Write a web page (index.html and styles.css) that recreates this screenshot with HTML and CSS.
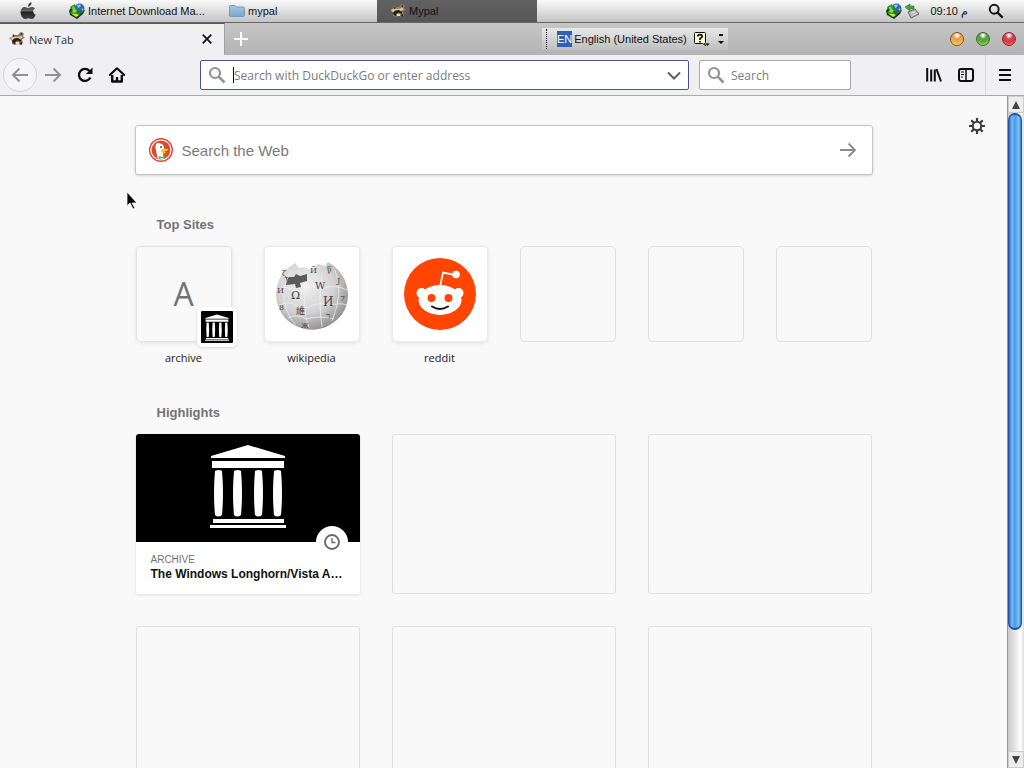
FILE: index.html
```html
<!DOCTYPE html>
<html lang="en">
<head>
<meta charset="utf-8">
<title>New Tab</title>
<link rel="stylesheet" href="styles.css">
</head>
<body>
<svg class="defs" aria-hidden="true">
  <defs>
    <linearGradient id="apple-g" x1="0" y1="0" x2="0" y2="1"><stop offset="0" stop-color="#222"/><stop offset=".5" stop-color="#666"/><stop offset=".6" stop-color="#222"/><stop offset="1" stop-color="#444"/></linearGradient>
    <linearGradient id="folder-g" x1="0" y1="0" x2="0" y2="1"><stop offset="0" stop-color="#a6cbe3"/><stop offset="1" stop-color="#78a8ca"/></linearGradient>
    <radialGradient id="globe-g" cx=".4" cy=".35" r=".68"><stop offset="0" stop-color="#f1f1f1"/><stop offset=".6" stop-color="#d2d2d2"/><stop offset="1" stop-color="#8f8f8f"/></radialGradient>
    <symbol id="lens" viewBox="0 0 18 18"><circle cx="7" cy="7" r="5" fill="none" stroke="currentColor" stroke-width="2.2"/><path d="M10.7 10.7 16.5 16.5" stroke="currentColor" stroke-width="2.6"/></symbol>
    <symbol id="idm" viewBox="0 0 16 16">
      <path d="M0 8 3 3 9 8 16 7 14 11 8 16 1 12z" fill="#17391a"/>
      <circle cx="10.500" cy="5.500" r="5" fill="#2f69a6"/><path d="M8 2q2-1 4 0l-1 2-2 1zM12.500 6l2-1-1 3z" fill="#9cc3e0"/>
      <path d="M1 4 6 1l1 5 3 2-3 4-6-2 2-3z" fill="#249128"/><path d="M3 4.500 5 3l1 3 2 2-2 2-3-1 1-2z" fill="#7be03a"/>
      <path d="M2 10.500 7 11l6-3-4 5-2 1z" fill="#e8d52a"/><path d="M7 9l5-2 1 2-4 3z" fill="#197a2c"/>
    </symbol>
    <symbol id="raccoon" viewBox="0 0 16 16">
      <path d="M0 7 3 5.500 4 3 6 4 9 4 11 1.500 13 1 15 3 14 5 16 7 13 8 14 12 12 14 9 13 6 14 3 13 3 10z" fill="#8d7b62"/>
      <path d="M1 7 4 5.500 8 6 12 5 14 6 11 8 9 7.500 6 9 3 9z" fill="#d9caa6"/>
      <path d="M3 10 5 7.500 9 7 12 9 12 11 10 10 8 9.500 6 11 6 13 4 12zM4 4l2 1-2 1zM11 3l2-1v2zM11 12l2-1v2l-1 1z" fill="#241e19"/>
      <path d="M7 11h3v2H7z" fill="#eee2c4"/>
    </symbol>
    <symbol id="temple" viewBox="0 0 76 84">
      <path d="M1 12 38 1 75 12v2H1zM2 17h72v7H2zM3 75h71v4H3zM0 81h76v3H0z" fill="#fff"/>
      <g fill="#fff"><path id="column" d="M5 27q4-2 7 0 2 22 0 44-4 3-7 0-2-22 0-44z"/><use href="#column" x="19"/><use href="#column" x="40"/><use href="#column" x="59"/></g>
    </symbol>
  </defs>
</svg>

<header class="menubar">
  <button class="apple" aria-label="Apple menu"><svg width="16" height="18" viewBox="0 0 16 18"><path d="M8 4.8C8 2.500 9.500.600 11.500.300 11.700 2.500 10.200 4.300 8 4.800zM8 6C9 6 10 5 12 5c1 0 2.300.500 3 1.500-2.600 1.500-2.300 5 .6 6.200C14.800 15 13.200 17 12 17c-1.500 0-2-.8-3.600-.8S6.200 17 5 17C2.500 17 .5 13 .5 10 .5 7 2.400 5 4.700 5 6 5 7 6 8 6z" fill="url(#apple-g)"/></svg></button>
  <button class="task"><svg width="16" height="16"><use href="#idm"/></svg>Internet Download Ma...</button>
  <button class="task"><svg width="16" height="14" viewBox="0 0 16 14"><path d="M.5 3Q.5 1.500 2 1.500h4l1.500 1.500H14q1.500 0 1.500 1.500V11q0 1.500-1.500 1.500H2Q.5 12.500.5 11z" fill="url(#folder-g)" stroke="#7897ad"/></svg>mypal</button>
  <button class="task task-active"><svg width="16" height="16"><use href="#raccoon"/></svg>Mypal</button>
  <div class="tray">
    <svg width="16" height="16"><use href="#idm"/></svg>
    <svg width="16" height="16" viewBox="0 0 16 16"><path d="M4 9 11 6l4 5-8 4z" fill="#b4b4b4" stroke="#666"/><path d="M7 10.500l4-2M8.500 12.500l4-2" stroke="#eee"/><path d="M1 4 6 1v2h4v3H6v2z" fill="#3aaa35" stroke="#26752a" stroke-width=".6"/></svg>
    <span class="clock">09:10 م</span>
    <button aria-label="Search"><svg class="dark" width="16" height="16"><use href="#lens"/></svg></button>
  </div>
</header>

<div class="tabstrip">
  <div class="tab"><svg width="16" height="16"><use href="#raccoon"/></svg><span>New Tab</span>
    <button aria-label="Close tab"><svg width="10" height="10" viewBox="0 0 10 10"><path d="M.7.7 9.300 9.300M9.300.7.7 9.300" stroke="#111" stroke-width="1.700"/></svg></button></div>
  <button class="newtab" aria-label="New tab"><svg width="14" height="14" viewBox="0 0 14 14"><path d="M7 0v14M0 7h14" stroke="#fff" stroke-width="2"/></svg></button>
  <div class="window-buttons">
    <button class="orb amber" aria-label="Minimize"></button>
    <button class="orb green" aria-label="Maximize"></button>
    <button class="orb red" aria-label="Close"></button>
  </div>
  <div class="langbar">
    <span class="grip"></span><span class="code">EN</span><span class="lang">English (United States)</span>
    <button aria-label="Help"><svg width="17" height="16" viewBox="0 0 17 16"><path d="M2.500 1.500h9q1 0 1 1v9q0 1-1 1l1 2-3-2h-7q-1 0-1-1v-9q0-1 1-1z" fill="#ffffd9" stroke="#111"/><path d="M4.800 5.500Q4.800 3.700 7 3.700T9.200 5.500Q9.200 6.500 7 7.500v1.500M7 10v1.500" fill="none" stroke="#111" stroke-width="1.700"/><path d="M12.500 12.500h4l-2 2.500z"/></svg></button>
    <button aria-label="Options"><svg width="6" height="12" viewBox="0 0 6 12"><path d="M1 2h4" stroke="#000" stroke-width="2"/><path d="M0 8h6l-3 3z"/></svg></button>
  </div>
</div>

<nav class="toolbar">
  <button class="back" aria-label="Back"><svg width="18" height="16" viewBox="0 0 18 16"><path d="M17 8H2M8.500 1.500 2 8l6.500 6.500" fill="none" stroke="#929294" stroke-width="2"/></svg></button>
  <button class="nav" aria-label="Forward"><svg width="18" height="16" viewBox="0 0 18 16"><path d="M1 8h15M9.500 1.500 16 8l-6.500 6.500" fill="none" stroke="#929294" stroke-width="2"/></svg></button>
  <button class="nav" aria-label="Reload"><svg width="16" height="16" viewBox="0 0 16 16"><path d="M13.400 10.500A6 6 0 1 1 12.500 4" fill="none" stroke="#0c0c0d" stroke-width="2.300"/><path d="M15.500.5V7H9z" fill="#0c0c0d"/></svg></button>
  <button class="nav" aria-label="Home"><svg width="16" height="16" viewBox="0 0 16 16"><path d="M.8 8 8 1.300 15.200 8" fill="none" stroke="#0c0c0d" stroke-width="2.200" stroke-linecap="round" stroke-linejoin="round"/><path d="M3.200 8v6.500h9.600V8M8 10v5" fill="none" stroke="#0c0c0d" stroke-width="2.400" stroke-linejoin="round"/></svg></button>
  <label class="field address"><svg width="18" height="18"><use href="#lens"/></svg><span class="caret"></span><input type="text" aria-label="Address" placeholder="Search with DuckDuckGo or enter address"><svg width="14" height="9" viewBox="0 0 14 9"><path d="M1 1.500 7 7.500 13 1.500" fill="none" stroke="#606062" stroke-width="2"/></svg></label>
  <label class="field search"><svg width="18" height="18"><use href="#lens"/></svg><input type="text" aria-label="Search" placeholder="Search"></label>
  <div class="tools">
    <button aria-label="Library"><svg width="16" height="16" viewBox="0 0 16 16"><path d="M1.200 1v13.500M5.200 2.500v12M8.800 2.500v12M10.500 2 15 14.500" fill="none" stroke="#0c0c0d" stroke-width="2"/></svg></button>
    <button aria-label="Sidebars"><svg width="16" height="16" viewBox="0 0 16 16"><rect x="1" y="2" width="14" height="12" rx="2" fill="none" stroke="#0c0c0d" stroke-width="2"/><path d="M8 2v12" stroke="#0c0c0d" stroke-width="1.500"/><path d="M3 5h3M3 7.500h3M3 10h2" stroke="#0c0c0d"/></svg></button>
    <button class="menu" aria-label="Menu"><svg width="12" height="14" viewBox="0 0 12 14"><path d="M0 2h12M0 7h12M0 12h12" stroke="#0c0c0d" stroke-width="2"/></svg></button>
  </div>
</nav>

<div class="viewport">
  <main class="page">
    <button class="settings" aria-label="Settings"><svg width="16" height="16" viewBox="0 0 16 16"><circle cx="8" cy="8" r="4.200" fill="none" stroke="#3a3a3c" stroke-width="2"/><path d="M8 0v3M8 13v3M0 8h3M13 8h3M2.300 2.300l2.300 2.300M11.400 11.400l2.300 2.300M13.700 2.300l-2.300 2.300M4.600 11.400l-2.300 2.300" stroke="#3a3a3c" stroke-width="2.200"/></svg></button>
    <svg class="cursor" width="12" height="20" viewBox="0 0 12 20"><path d="M1 1v14l3-3 3 6 2-1-3-5h5z" fill="#000" stroke="#fff" stroke-width=".8"/></svg>
    <div class="content">
      <form class="websearch">
        <svg width="24" height="24" viewBox="0 0 24 24"><circle cx="12" cy="12" r="12" fill="#dc4a31"/><circle cx="12" cy="12" r="10" fill="none" stroke="#fff" stroke-width="1.200"/><path d="M8 5Q6 6.500 6.500 10L8.500 20q3.500 2 6.500 1l-1-5q2-4 1-7Q14 5 8 5z" fill="#fff"/><circle cx="12" cy="9" r="1" fill="#395a83"/><path d="M12 12q4-2 7.500-.5-2 2-4 2 2 1 1 2-3 0-4.500-2z" fill="#fbc02d"/><path d="M10 18l3 1 3-1v3l-3-1-3 1z" fill="#4caf50"/></svg>
        <input type="text" aria-label="Search the Web" placeholder="Search the Web">
        <button aria-label="Go"><svg width="18" height="16" viewBox="0 0 18 16"><path d="M1 8h15M9.500 1.500 16 8l-6.500 6.500" fill="none" stroke="#8a8a8c" stroke-width="1.800"/></svg></button>
      </form>

      <h2>Top Sites</h2>
      <div class="sites">
        <a class="site" href="#archive"><span class="tile letter">A<span class="badge"><svg width="24" height="27"><use href="#temple"/></svg></span></span>archive</a>
        <a class="site" href="#wikipedia"><span class="tile filled"><svg width="76" height="76" viewBox="0 0 76 76">
          <path d="M21 7 14 12Q2 22 2 40 4 60 20 69q17 9 34 1 19-10 20-30 0-18-14-30L54 6l-3 4-7-2-3 3-4 3-7-3-5 1z" fill="url(#globe-g)"/>
          <path d="M12 21h8l2-3 4 2 7-2v7l-7 2 1 4-5 1-1-4-9 1z" fill="#5c5c5c"/>
          <path d="M17 15q-9 17-7 29 3 16 12 25M33 31q-6 18 2 41M48 18q-4 24 0 53M61 14q9 22-3 51M3 34q10-5 16 0 8 5 14-2 8-3 15 1 11-6 25 1M5 49q11-5 18 1 9 4 16-1 8-3 17 1 8-4 17-1M14 62q10-5 18 1 15-4 28 0" fill="none" stroke="#f3f3f3" stroke-width=".7"/>
          <g class="glyphs"><text x="17" y="43" font-size="11">Ω</text><text x="41" y="33" font-size="10">W</text><text x="49" y="50" font-size="12">И</text><text x="22" y="58" font-size="9">維</text><text x="52" y="63" font-size="9">ר</text><text x="3" y="37" font-size="8">И</text><text x="5" y="54" font-size="8">ន</text><text x="36" y="17" font-size="8">Й</text><text x="53" y="16" font-size="8">წ</text><text x="63" y="27" font-size="8">J</text><text x="66" y="45" font-size="8">7</text><text x="8" y="20" font-size="8">ζ</text><text x="27" y="72" font-size="7">Ж</text></g>
        </svg></span>wikipedia</a>
        <a class="site" href="#reddit"><span class="tile filled"><svg width="72" height="72" viewBox="0 0 72 72"><circle cx="36" cy="36" r="36" fill="#ff4500"/><g fill="#fff"><circle cx="17.500" cy="35" r="5"/><circle cx="54.500" cy="35" r="5"/><ellipse cx="36" cy="42" rx="21.500" ry="15"/><circle cx="52" cy="16.500" r="3.800"/></g><path d="M36 29 39 14.500 51 17" fill="none" stroke="#fff" stroke-width="1.800"/><circle cx="27.500" cy="40" r="4" fill="#ff4500"/><circle cx="44.500" cy="40" r="4" fill="#ff4500"/><path d="M28 48.500q8 5 16 0" fill="none" stroke="#111" stroke-width="2" stroke-linecap="round"/></svg></span>reddit</a>
        <span class="tile"></span><span class="tile"></span><span class="tile"></span>
      </div>

      <h2>Highlights</h2>
      <div class="cards">
        <a class="card story" href="#story">
          <span class="preview"><svg width="76" height="84"><use href="#temple"/></svg>
            <span class="visited"><svg width="16" height="16" viewBox="0 0 16 16"><circle cx="8" cy="8" r="7" fill="none" stroke="#6b6b6d" stroke-width="1.900"/><path d="M8 4v4.500h3.500" fill="none" stroke="#6b6b6d" stroke-width="1.300"/></svg></span></span>
          <span class="host">ARCHIVE</span>
          <span class="title">The Windows Longhorn/Vista A…</span>
        </a>
        <span class="card"></span><span class="card"></span><span class="card"></span><span class="card"></span><span class="card"></span>
      </div>
    </div>
  </main>
  <div class="scrollbar">
    <button aria-label="Scroll up"><svg width="8" height="8" viewBox="0 0 8 8"><path d="M0 8 4 0l4 8z" fill="#444"/></svg></button>
    <div class="track"><div class="thumb"></div></div>
    <button aria-label="Scroll down"><svg width="8" height="8" viewBox="0 0 8 8"><path d="M0 0h8L4 8z" fill="#444"/></svg></button>
  </div>
</div>
</body>
</html>
```
FILE: styles.css
```css
* { box-sizing: border-box; }
body {
  margin: 0;
  height: 100vh;
  display: flex;
  flex-direction: column;
  overflow: hidden;
  font-family: "Liberation Sans", Arial, sans-serif;
  font-size: 11px;
  color: #111;
  background: #f9f9fa;
}
button {
  display: flex;
  align-items: center;
  justify-content: center;
  padding: 0;
  border: 0;
  background: none;
  font: inherit;
  color: inherit;
}
input { min-width: 0; border: 0; padding: 0; outline: 0; background: none; font: inherit; }
svg { display: block; flex: none; }
a { color: inherit; text-decoration: none; }
.defs { position: absolute; width: 0; height: 0; }

.menubar {
  display: flex;
  flex: none;
  height: 23px;
  background: linear-gradient(#fafafa, #dedede 50%, #c4c4c4);
  border-bottom: 1px solid #666;
}
.apple { width: 55px; }
.task { width: 160px; padding: 0 14px; justify-content: flex-start; gap: 3px; white-space: nowrap; }
.task-active { margin-left: 2px; padding-left: 13px; background: linear-gradient(#626262, #565656); }
.tray { display: flex; align-items: center; gap: 2px; margin-left: auto; padding-right: 20px; }
.clock { margin: 0 18px 0 8px; }
.dark { color: #111; }

.tabstrip {
  position: relative;
  display: flex;
  flex: none;
  height: 32px;
  background: linear-gradient(#c6c6c6, #b3b3b3);
}
.tab {
  display: flex;
  align-items: center;
  gap: 4px;
  width: 225px;
  padding: 0 12px 1px 9px;
  background: #f0eff2;
  border-top: 1px solid #2f5fae;
  border-right: 1px solid #a2a2a2;
  font-family: "Open Sans", sans-serif;
  color: #333;
}
.tab button { margin-left: auto; }
.newtab { width: 32px; }
.window-buttons { display: flex; align-items: center; gap: 12px; margin-left: auto; padding-right: 8px; }
.orb { width: 14px; height: 14px; border-radius: 50%; border: 1px solid #8a4d22; }
.amber { background: radial-gradient(circle at 50% 20%, #fff 0 6%, #e39a55 32%, #f5b043 60%, #ffe77c); }
.green { border-color: #3d6b2c; background: radial-gradient(circle at 50% 20%, #fff 0 6%, #5c984a 32%, #5fb039 60%, #b6ec7c); }
.red { border-color: #94202a; background: radial-gradient(circle at 50% 20%, #fff 0 6%, #cf4a52 32%, #e0333c 60%, #ff8f8f); }
.langbar {
  position: absolute;
  left: 542px;
  top: 5px;
  display: flex;
  align-items: center;
  height: 22px;
  padding: 0 4px;
  background: linear-gradient(#e8e8e8, #bebebe);
}
.grip { width: 2px; height: 20px; margin-right: 9px; border-left: 1px dotted #000; }
.code { background: #3260ac; color: #fff; line-height: 16px; }
.lang { margin: 0 6px 0 2px; }
.langbar button + button { margin-left: 8px; }

.toolbar {
  display: flex;
  align-items: center;
  flex: none;
  height: 41px;
  padding-left: 3px;
  background: #f0eff2;
  border-bottom: 1px solid #aaaaac;
}
.back { width: 34px; height: 34px; border: 1px solid #d4d4d6; border-radius: 50%; background: #f5f5f7; }
.nav { width: 32px; height: 32px; }
.field {
  display: flex;
  align-items: center;
  height: 30px;
  padding: 0 7px;
  background: #fff;
  border: 1px solid #a9a9ae;
  border-radius: 2px;
  color: #929294;
  font-family: "Open Sans", sans-serif;
  font-size: 12px;
}
.field input { flex: 1; }
.field input::placeholder { color: #7c7c7e; opacity: 1; }
.address { flex: 1; margin-left: 67px; border-color: #4a5494; }
.caret { width: 1px; height: 16px; margin-left: 7px; background: #000; }
.search { width: 152px; margin-left: 10px; gap: 6px; }
.tools { display: flex; align-items: center; gap: 16px; margin-left: 75px; }
.menu { height: 40px; width: 39px; margin-left: -5px; border-left: 1px solid #dcdcdf; }

.viewport { display: flex; flex: 1; min-height: 0; }
.page { position: relative; flex: 1; min-width: 0; overflow: hidden; background: #f9f9fa; }
.settings { position: absolute; top: 22px; right: 22px; }
.cursor { position: absolute; left: 126px; top: 95px; }
.content { width: 738px; max-width: 100%; margin: 0 auto; padding: 29px 1px 0; }
.websearch {
  display: flex;
  align-items: center;
  gap: 9px;
  height: 50px;
  margin: 0 -1px;
  padding: 0 15px 0 13px;
  background: #fff;
  border: 1px solid #c6c6c8;
  border-radius: 3px;
  box-shadow: 0 1px 3px rgba(0, 0, 0, .15);
  font-size: 15px;
}
.websearch input { flex: 1; }
.websearch input::placeholder { color: #7a7a7c; opacity: 1; }
h2 { margin: 40px 0 12px 21px; font-size: 13px; line-height: 19px; color: #737375; }
.sites { display: grid; grid-template-columns: repeat(6, 1fr); gap: 32px; height: 116px; }
.site { text-align: center; font-family: "Open Sans", sans-serif; line-height: 16px; color: #222; }
.tile { position: relative; display: block; height: 96px; border: 1px solid #dededf; border-radius: 5px; }
.site .tile { display: flex; align-items: center; justify-content: center; margin-bottom: 8px; border-color: #e2e2e3; box-shadow: 0 1px 4px rgba(0, 0, 0, .1); }
.site .filled { background: #fff; border-color: #ececed; }
.letter { font-family: "Open Sans", sans-serif; font-size: 32px; color: #737375; }
.badge {
  position: absolute;
  right: -6px;
  bottom: -6px;
  display: flex;
  align-items: center;
  justify-content: center;
  width: 40px;
  height: 40px;
  background: #000;
  border: 4px solid #fff;
  border-radius: 5px;
  box-shadow: 0 1px 3px rgba(0, 0, 0, .15);
}
.glyphs { font-family: "DejaVu Serif", "Noto Sans CJK SC", serif; fill: #444; }
.sites + h2 { margin-top: 41px; }
.cards { display: grid; grid-template-columns: repeat(3, 1fr); grid-auto-rows: 160px; gap: 32px; }
.card { border: 1px solid #dededf; border-radius: 3px; }
.story { display: flex; flex-direction: column; border: 0; background: #fff; box-shadow: 0 1px 3px rgba(0, 0, 0, .12); }
.preview { position: relative; display: flex; justify-content: center; height: 108px; padding-top: 10px; margin-bottom: 10px; border-radius: 3px 3px 0 0; background: #000; }
.visited { position: absolute; right: 12px; bottom: -16px; display: flex; align-items: center; justify-content: center; width: 32px; height: 32px; border-radius: 50%; background: #fff; }
.host, .title { padding: 0 15px; line-height: 15px; white-space: nowrap; }
.host { font-size: 10px; color: #737375; }
.title { font-size: 12px; font-weight: bold; }

.scrollbar { display: flex; flex-direction: column; flex: none; width: 17px; border-left: 1px solid #999; background: linear-gradient(90deg, #c9c9c9, #fff 80%, #ddd); }
.scrollbar button { height: 17px; background: #eee; border: 1px solid #ccc; }
.track { flex: 1; }
.thumb { height: 81%; margin-right: 2px; border: 1px solid #24519f; border-bottom-width: 2px; border-top-width: 2px; border-radius: 7px; background: linear-gradient(90deg, #2c62c4, #7fb9ef 25%, #4a98e8 50%, #7cc4f8 80%, #3b7cd0); }
```
